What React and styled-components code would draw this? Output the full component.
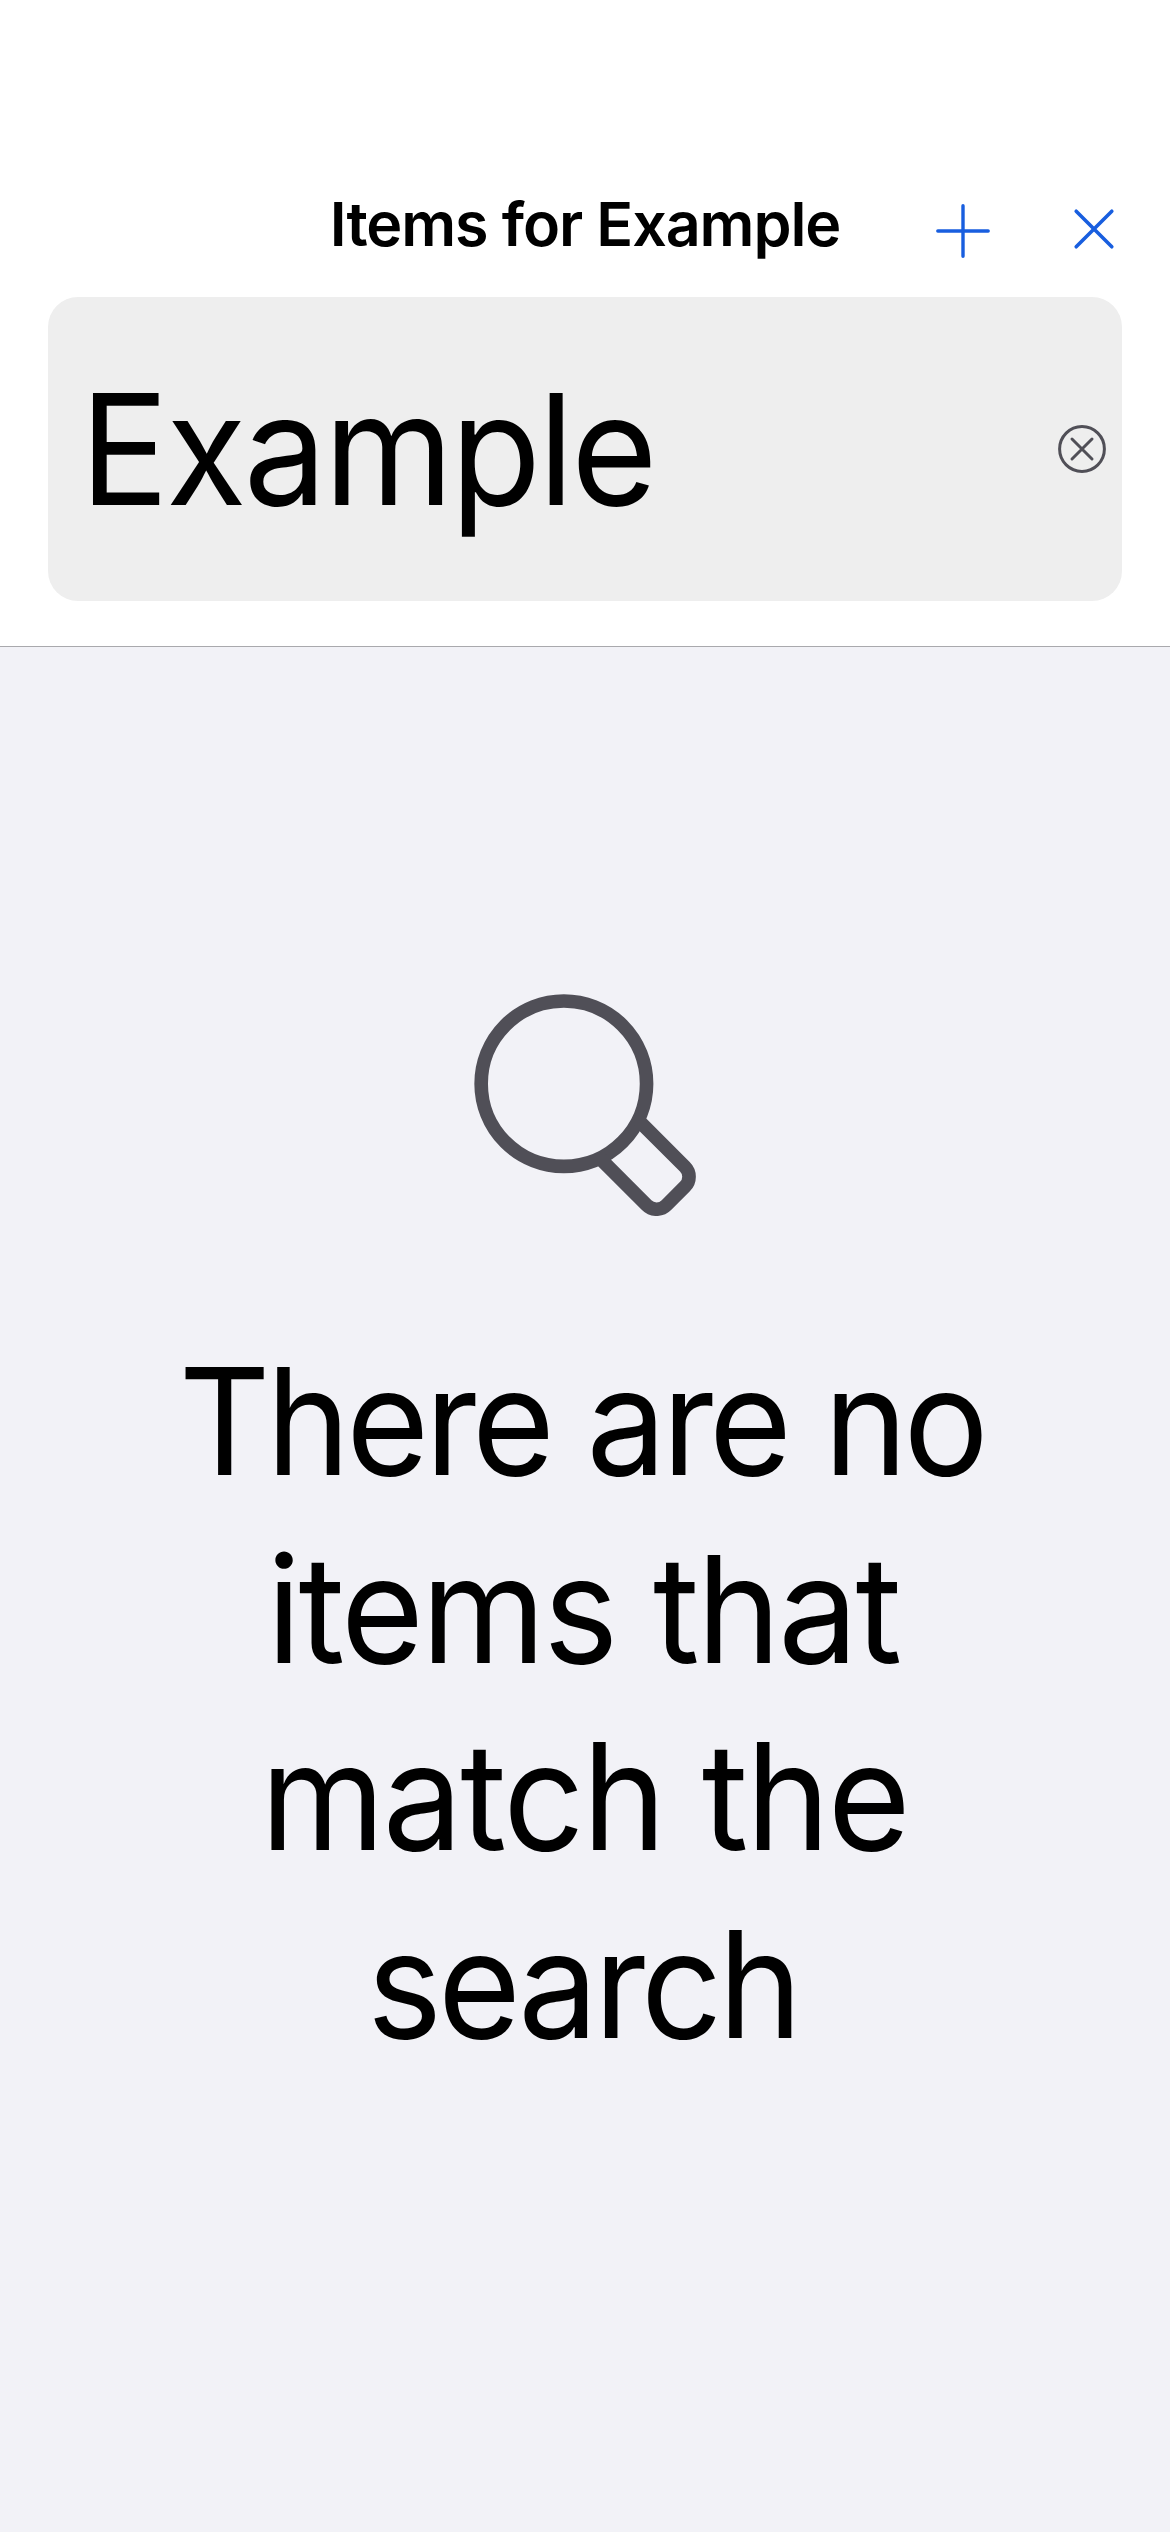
import React, { useState } from "react";
import styled, { createGlobalStyle } from "styled-components";

const GlobalStyle = createGlobalStyle`
  *, *::before, *::after { box-sizing: border-box; }
  body {
    margin: 0;
    background: #f2f2f7;
    font-family: Inter, "Liberation Sans", sans-serif;
    color: #000;
  }
`;

const Screen = styled.div`
  display: flex;
  flex-direction: column;
  width: 1170px;
  height: 2532px;
  overflow: hidden;
`;

const Header = styled.header`
  height: 647px;
  padding: 162px 48px 0;
  background: #fff;
  border-bottom: 1px solid #a9a9ad;
`;

const NavBar = styled.div`
  display: grid;
  grid-template-columns: 1fr auto 1fr;
  align-items: center;
  height: 135px;
`;

const Title = styled.h1`
  grid-column: 2;
  margin: 0;
  padding-bottom: 12px;
  font-size: 61px;
  line-height: 74px;
  font-weight: 600;
  letter-spacing: -1.1px;
  white-space: nowrap;
`;

const Actions = styled.div`
  display: flex;
  justify-content: flex-end;
  align-items: center;
  gap: 77px;
  padding-top: 2px;
  margin-right: 1.5px;
`;

const IconButton = styled.button`
  display: flex;
  flex: none;
  padding: 0;
  border: 0;
  background: none;
  color: ${(p) => p.$color};
`;

const SearchField = styled.div`
  display: flex;
  align-items: center;
  justify-content: space-between;
  height: 304px;
  padding: 0 16px 0 32px;
  border-radius: 30px;
  background: #eee;
`;

const SearchInput = styled.input`
  flex: 1;
  min-width: 0;
  height: 200px;
  padding: 0;
  border: 0;
  outline: 0;
  background: none;
  color: #000;
  font: 430 154px Inter, "Liberation Sans", sans-serif;
  letter-spacing: -3px;
  transform: scaleX(0.96);
  transform-origin: left;
`;

const EmptyState = styled.main`
  display: flex;
  flex: 1;
  flex-direction: column;
  align-items: center;
  padding-top: 347px;
  gap: 112px;
`;

const Message = styled.p`
  width: 860px;
  margin: 0;
  font-size: 148px;
  font-weight: 430;
  line-height: 187.67px;
  text-align: center;
  transform: scaleX(0.96);
`;

const Line = styled.span`
  display: block;
  padding-right: ${(p) => p.$trim}px;
  letter-spacing: ${(p) => p.$tracking}px;
  white-space: nowrap;
`;

const LINES = [
  { text: "There are no", tracking: -4.3, trim: 7 },
  { text: "items that", tracking: -2.7, trim: 4 },
  { text: "match the", tracking: -2.3, trim: 1 },
  { text: "search", tracking: -4.2, trim: 5 },
];

const PlusIcon = () => (
  <svg width="54" height="54" viewBox="0 0 54 54" fill="none" stroke="currentColor" strokeWidth="3.4" strokeLinecap="round">
    <path d="M1.8 27h50.4M27 1.8v50.4" />
  </svg>
);

const CloseIcon = () => (
  <svg width="54" height="54" viewBox="0 0 54 54" fill="none" stroke="currentColor" strokeWidth="3.6" strokeLinecap="round">
    <path d="M9.2 7.2l35.6 35.6M44.8 7.2L9.2 42.8" />
  </svg>
);

const ClearIcon = () => (
  <svg width="48" height="48" viewBox="0 0 48 48" fill="none" stroke="currentColor" strokeWidth="3" strokeLinecap="round">
    <circle cx="24" cy="24" r="22.4" />
    <path d="M14 14l20 20M34 14L14 34" />
  </svg>
);

const MagnifierIcon = () => (
  <svg width="222" height="222" viewBox="72 71 666 667" fill="none" stroke="#504f57" strokeWidth="41">
    <circle cx="341.5" cy="340.5" r="248.5" />
    <path d="M567 452L705 590A42 42 0 0 1 705 650L650 705A42 42 0 0 1 590 705L453 568" />
  </svg>
);

export default function App() {
  const [query, setQuery] = useState("Example");
  return (
    <>
      <GlobalStyle />
      <Screen>
        <Header>
          <NavBar>
            <Title>Items for Example</Title>
            <Actions>
              <IconButton $color="#185edf" aria-label="Add">
                <PlusIcon />
              </IconButton>
              <IconButton $color="#185edf" aria-label="Close">
                <CloseIcon />
              </IconButton>
            </Actions>
          </NavBar>
          <SearchField>
            <SearchInput
              value={query}
              onChange={(e) => setQuery(e.target.value)}
              aria-label="Search"
            />
            <IconButton $color="#504f57" aria-label="Clear" onClick={() => setQuery("")}>
              <ClearIcon />
            </IconButton>
          </SearchField>
        </Header>
        <EmptyState>
          <MagnifierIcon />
          <Message>
            {LINES.map((line) => (
              <Line key={line.text} $tracking={line.tracking} $trim={line.trim}>
                {line.text}{" "}
              </Line>
            ))}
          </Message>
        </EmptyState>
      </Screen>
    </>
  );
}
